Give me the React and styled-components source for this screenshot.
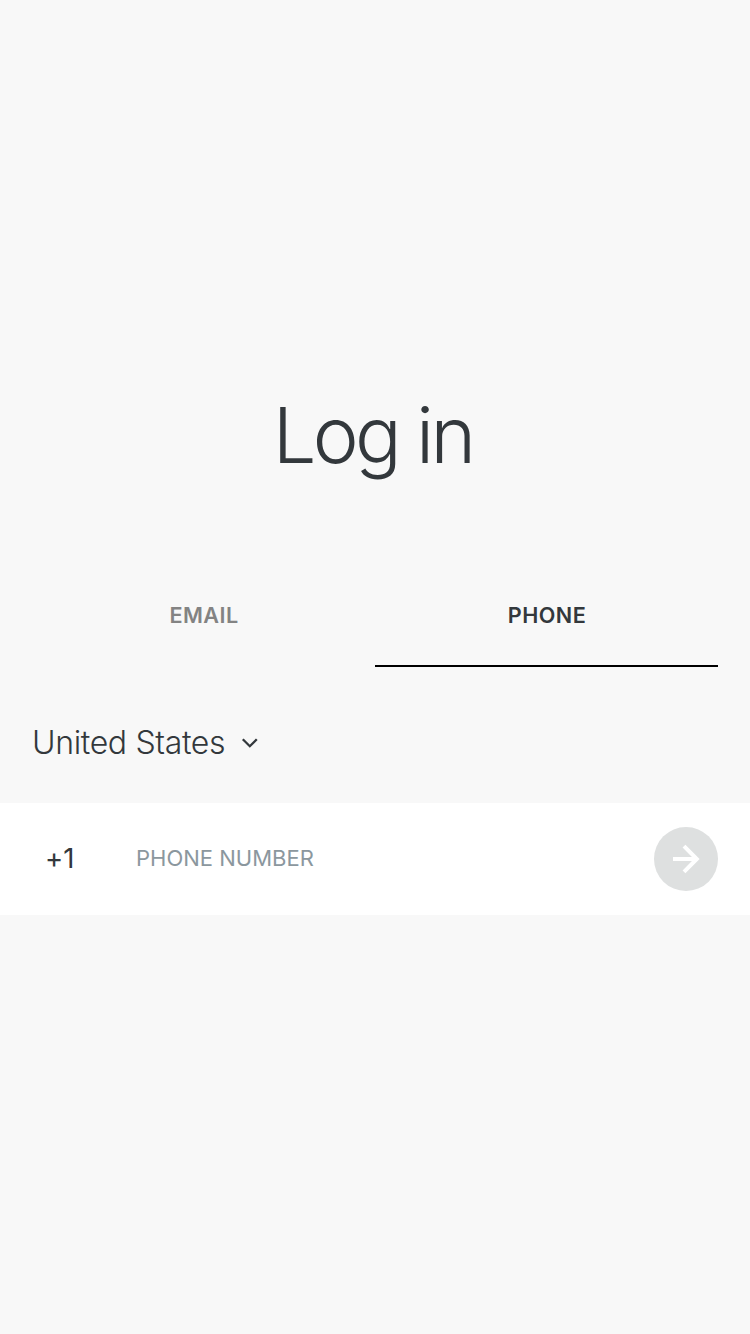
import React from "react";
import styled, { createGlobalStyle } from "styled-components";

const GlobalStyle = createGlobalStyle`
  *, *::before, *::after { box-sizing: border-box; }
  body {
    margin: 0;
    background: #f8f8f8;
    color: #33383c;
    font-family: Inter, "Liberation Sans", sans-serif;
  }
  button, input { font: inherit; color: inherit; border: 0; padding: 0; background: none; }
`;

const Screen = styled.main`
  display: flex;
  flex-direction: column;
  min-height: 1334px;
  padding-top: 385px;
`;

const Title = styled.h1`
  margin: 0;
  height: 100px;
  padding-right: 5px;
  line-height: 100px;
  text-align: center;
  font-size: 77.5px;
  font-weight: 300;
  letter-spacing: -3.7px;
`;

const Tabs = styled.nav`
  display: flex;
  margin: 79px 32px 0;
`;

const Tab = styled.button`
  flex: 1;
  height: 103px;
  padding-left: 1px;
  border-bottom: 2px solid ${(p) => (p.$active ? "#000" : "transparent")};
  color: ${(p) => (p.$active ? "#33383c" : "#838383")};
  font-size: 21.6px;
  font-weight: 570;
  letter-spacing: 0.45px;
`;

const Country = styled.button`
  display: flex;
  align-items: center;
  align-self: flex-start;
  gap: 16px;
  height: 40px;
  margin: 55px 0 41px 32px;
  font-size: 32px;
  font-weight: 300;
  letter-spacing: -0.36px;
`;

const Chevron = styled.svg`
  margin-top: 2px;
`;

const PhoneRow = styled.form`
  display: flex;
  align-items: center;
  height: 112px;
  padding: 0 32px;
  background: #fff;
`;

const DialCode = styled.span`
  width: 104px;
  padding: 0 0 2px 13px;
  font-size: 27.5px;
  font-feature-settings: "calt" 0;
`;

const PhoneInput = styled.input`
  flex: 1;
  height: 60px;
  padding-bottom: 2px;
  outline: none;
  font-size: 22px;
  &::placeholder { color: #8b979e; opacity: 1; }
`;

const Submit = styled.button`
  display: grid;
  place-items: center;
  width: 64px;
  height: 64px;
  border-radius: 50%;
  background: #dee0e0;
`;

export default function App() {
  return (
    <Screen>
      <GlobalStyle />
      <Title>Log in</Title>
      <Tabs>
        <Tab>EMAIL</Tab>
        <Tab $active>PHONE</Tab>
      </Tabs>
      <Country>
        United States
        <Chevron width="18" height="12" viewBox="0 0 18 12" fill="none" stroke="currentColor" strokeWidth="2.3">
          <path d="M1.8 2.2l7 7 7-7" />
        </Chevron>
      </Country>
      <PhoneRow>
        <DialCode>+1</DialCode>
        <PhoneInput type="tel" placeholder="PHONE NUMBER" />
        <Submit type="button" aria-label="Continue">
          <svg width="30" height="32" viewBox="0 0 30 32" fill="none" stroke="#fff" strokeWidth="4">
            <path d="M2 16h24M13 3.2L25.8 16 13 28.8" />
          </svg>
        </Submit>
      </PhoneRow>
    </Screen>
  );
}
